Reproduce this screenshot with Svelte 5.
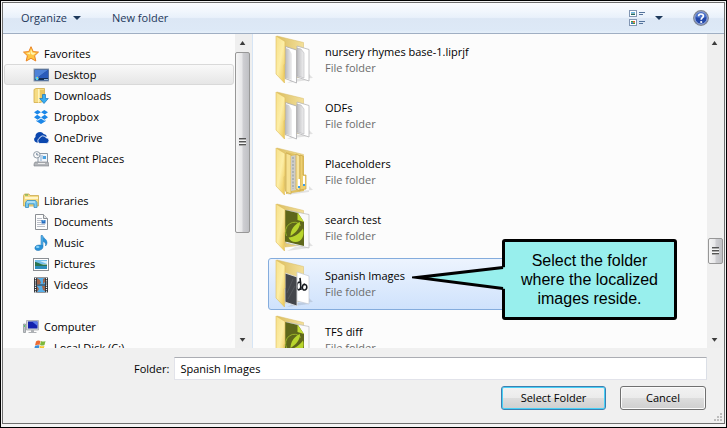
<script>
  const groups = [
    {
      name: 'Favorites', icon: 'star',
      items: [
        { name: 'Desktop', icon: 'desktop', current: true },
        { name: 'Downloads', icon: 'downloads' },
        { name: 'Dropbox', icon: 'dropbox' },
        { name: 'OneDrive', icon: 'onedrive' },
        { name: 'Recent Places', icon: 'recent' }
      ]
    },
    {
      name: 'Libraries', icon: 'libraries',
      items: [
        { name: 'Documents', icon: 'documents' },
        { name: 'Music', icon: 'music' },
        { name: 'Pictures', icon: 'pictures' },
        { name: 'Videos', icon: 'videos' }
      ]
    },
    {
      name: 'Computer', icon: 'computer',
      items: [{ name: 'Local Disk (C:)', icon: 'disk' }]
    }
  ];

  const folders = [
    { name: 'nursery rhymes base-1.liprjf', kind: 'pages' },
    { name: 'ODFs', kind: 'pages' },
    { name: 'Placeholders', kind: 'folders' },
    { name: 'search test', kind: 'leaf' },
    { name: 'Spanish Images', kind: 'photo', selected: true },
    { name: 'TFS diff', kind: 'leaf' }
  ];

  let folder = $state('Spanish Images');
</script>

{#snippet smallIcon(kind)}
  <svg class="small" viewBox="0 0 16 16" width="16" height="16" aria-hidden="true">
    {#if kind === 'star'}
      <path d="M8 .7 10.2 5.6 15.5 6.1 11.6 9.7 12.8 15 8 12.3 3.2 15 4.4 9.7.5 6.1 5.8 5.6Z" fill="#ffc642" stroke="#ea8324" stroke-width="1" />
      <path d="M8 3 9.3 6.5 13 7 10 9 8 8Z M8 3 6.7 6.5 3 7l4 1.500Z" fill="#fff3ae" />
    {:else if kind === 'desktop'}
      <rect x="1" y="2" width="15" height="12" fill="#234a8c" stroke="#8f9eb0" />
      <path d="M2 3h13L4 11H2Z" fill="#4f83d8" />
      <path d="M15 3v8H4Z" fill="#2a5cbb" />
      <path d="M2 11h13v2H2Z" fill="#142e55" />
      <circle cx="4" cy="11.500" r="1.700" fill="#5fd4f0" />
      <path d="M4 10h1v1H4Z" fill="#f4c545" />
      <path d="M11 12h4v1h-4Z" fill="#8fb7dc" />
    {:else if kind === 'downloads'}
      <path d="M1 1.500 3 .5h8.500V13L7 14.500H1Z" fill="#f6dc84" stroke="#d3ac48" stroke-width=".8" />
      <path d="M5 1h1.500v13L5 15Z" fill="#fff4bd" />
      <path d="M7 2h4v9H7Z" fill="#e8c761" />
      <path d="M9.500 6.500h3v4h2.800L11 15.500 6.700 10.500h2.800Z" fill="#39aef1" stroke="#1574bd" stroke-width=".7" />
    {:else if kind === 'dropbox'}
      <path d="M4.700 1 8 3.300 4.200 5.600 1 3.200ZM11.300 1 15 3.200 11.800 5.600 8 3.300ZM4.200 5.800 8 8.200 4.700 10.700 1 8.300ZM11.800 5.800 15 8.300 11.300 10.700 8 8.200ZM8 9.500l3.300 2.300 1.200-.7v1.200L8 15l-4.500-2.700v-1.200l1.200.7Z" fill="#1c87e8" />
    {:else if kind === 'onedrive'}
      <path d="M5 12.500H3.500A3 3 0 0 1 2.500 7 4.500 4.500 0 0 1 10.700 4 4 4 0 0 1 14 6.500L7 7Z" fill="#0b47ae" />
      <path d="M6.800 13.500a2.800 2.800 0 0 1-.2-5.300A3.500 3.500 0 0 1 13 7.700a2.900 2.900 0 0 1 .2 5.800Z" fill="#0b47ae" stroke="#fff" stroke-width=".8" />
    {:else if kind === 'recent'}
      <path d="M5 2.500h9.500V12H5Z" fill="#f2f6fa" stroke="#8c98a5" />
      <path d="M7 5h3M7 7h3M7 9h2" stroke="#84a9cf" />
      <path d="M10 5h3v3h-3Z" fill="#48a1e1" />
      <path d="M2 11h13l1 2v2H1v-2Z" fill="#b3b6ba" stroke="#7d8288" stroke-width=".6" />
      <path d="M5 12.500h7" stroke="#ececec" />
      <circle cx="3.800" cy="3.800" r="3.200" fill="#fafafa" stroke="#919ca7" />
      <path d="M3.800 2v2H5.500" stroke="#4c6480" fill="none" stroke-width=".8" />
    {:else if kind === 'libraries'}
      <path d="M.5 2.500 1.500 1H6l1 1.500h8.500V13h-15Z" fill="#f5db82" stroke="#caa94f" stroke-width=".8" />
      <path d="M2 4h13v2H2Z" fill="#fff5c8" />
      <path d="M2 2h3" stroke="#55a94c" />
      <path d="M2.500 14.500v-5L4 7.500h8.500l1.500 2v5h-3v-3.500H5.500v3.500Z" fill="#77c8ef" stroke="#3a8ebf" stroke-width=".8" />
      <path d="M4 9h8" stroke="#d8f2fc" />
    {:else if kind === 'documents'}
      <path d="M2.500.5h8l4 4v11h-12Z" fill="#fdfdfd" stroke="#8b8f94" />
      <path d="M10.500.5v4h4" fill="#e8e8e8" stroke="#8b8f94" />
      <path d="M4 4.500h5M4 6.500h5M4 8.500h4M4 10.500h8M4 12.500h8" stroke="#a8aebb" stroke-width=".8" />
      <path d="M8.500 6h4v3.500h-4Z" fill="#2568bb" />
      <path d="M9.500 6h2v1.500h-2Z" fill="#67b2ea" />
    {:else if kind === 'music'}
      <path d="M8 .5h1.500C10 3 14 4 14 7.500c0 1.500-.5 2.500-1.500 3.500.5-2.500-.5-4-2.500-4.500v5.300C10 14 7.500 15.500 5 15.500S1.500 14 2 12.300C2.500 10.500 5.500 9.500 8 10.300Z" fill="#2992d8" stroke="#1b6fae" stroke-width=".5" />
      <ellipse cx="4.700" cy="12" rx="1.800" ry="1" fill="#8bd4f8" />
      <path d="M9 1v9" stroke="#7fc8f2" stroke-width=".8" />
    {:else if kind === 'pictures'}
      <rect x=".5" y="2.500" width="15" height="12" fill="#fff" stroke="#8b8f94" />
      <path d="M2 4h12v4H2Z" fill="#75c0ec" />
      <path d="M7 5h7v3Z" fill="#d6eefb" />
      <path d="M2 6c3 0 5 3 12 2.500V10H2Z" fill="#2a7550" />
      <path d="M2 10h12v3H2Z" fill="#2d8dbb" />
    {:else if kind === 'videos'}
      <path d="M1 .5h14v15H1Z" fill="#2c3036" />
      <path d="M4 1h8v6.500H4ZM4 8.500h8V15H4Z" fill="#56aee8" />
      <path d="M4 1l3 2 1 3-2 1.500H4ZM10 2l2-1v4l-2 2ZM4 9l2 3-2 3ZM9 9h3v5l-2-1Z" fill="#a0654b" />
      <path d="M2.500 1v15M13.500 1v15" stroke="#fff" stroke-width="1.200" stroke-dasharray="1.200 1" />
    {:else if kind === 'computer'}
      <path d="M.5 5h2v8.500h-2Z" fill="#c0c4c8" stroke="#888d92" stroke-width=".7" />
      <path d="M1 6h1v2H1Z" fill="#4fd166" />
      <path d="M3.500 1.500h12V11h-12Z" fill="#d5d7da" stroke="#a2a5aa" stroke-width=".8" />
      <path d="M5 2.500h9.500V9.500H5Z" fill="#1320ad" />
      <path d="M9 2.500h5.500V7Z" fill="#5879ea" />
      <path d="M8 11h3v2h2.500v1h-8v-1H8Z" fill="#aeb1b5" />
    {:else}
      <path d="M1 9h11l4 3v3H1Z" fill="#b5b8bc" />
      <path d="M3 1.500C5 0 6 .5 7.500 1L6.500 5C5 4.500 4 4.500 2 5.500Z" fill="#ec6b32" />
      <path d="M8 1c1.500.7 3 .7 4.500 0l-1 4c-1.500.7-3 .7-4.500 0Z" fill="#7db83a" />
      <path d="M2 6c1.500-1 3-1 4.500-.5l-1 4C4 9 3 9 1 9.500Z" fill="#3b8fd8" />
      <path d="M7 5.700c1.500.7 3 .7 4.500 0l-1 4c-1.500.7-3 .7-4.500 0Z" fill="#f7c52f" />
    {/if}
  </svg>
{/snippet}

{#snippet folderIcon(kind)}
  <svg class="folder" viewBox="0 0 38 50" width="38" height="50" aria-hidden="true">
    <defs>
      <linearGradient id="flap" x1="0" y1="0" x2="1" y2="1">
        <stop offset="0" stop-color="#f6e08a" />
        <stop offset=".5" stop-color="#fdeea6" />
        <stop offset="1" stop-color="#ebc44f" />
      </linearGradient>
      <linearGradient id="back" x1="0" y1="0" x2="1" y2="0">
        <stop offset="0" stop-color="#dcbf62" />
        <stop offset="1" stop-color="#f3e09b" />
      </linearGradient>
      <linearGradient id="sheet" x1="0" y1="0" x2="1" y2="0">
        <stop offset="0" stop-color="#bcbcbf" />
        <stop offset="1" stop-color="#f0f0f1" />
      </linearGradient>
    </defs>
    <path d="M20 44 38 43 34 39V45L12 48Z" fill="#000" opacity=".1" />
    <path d="M2 1 28.500 7.500V42L10 44Z" fill="url(#back)" stroke="#d8bb62" stroke-width=".5" />
    {#if kind === 'pages'}
      <path d="M22 11 34 14.500V46L22 42Z" fill="#fff" stroke="#b5b5b8" stroke-width=".8" />
      <path d="M22 13 26 14 29 18V43L22 41Z" fill="url(#sheet)" stroke="#a9a9ac" stroke-width=".5" />
      <path d="M10.500 11.500 21.500 15V48L10.500 43.500Z" fill="#fff" stroke="#ababae" stroke-width=".8" />
      <path d="M10.500 13 14 14 17 19V45L10.500 43Z" fill="url(#sheet)" />
    {:else if kind === 'folders'}
      <path d="M11 5 29 9V44L11 47Z" fill="#e0c160" />
      <path d="M11 6 16 8V47L11 45Z" fill="#f6e193" stroke="#c9a94e" stroke-width=".7" />
      <path d="M16 9 21 8V43L16 44Z" fill="#cfcdc7" />
      <path d="M18 10V42" stroke="#8999a0" stroke-dasharray="2 1.500" />
      <path d="M21 7 25 9V44L21 42Z" fill="#f7e49c" stroke="#c8a446" stroke-width=".7" />
      <path d="M25 8 28 9V28H31V42L25 43Z" fill="#edcf70" stroke="#c8a446" stroke-width=".7" />
      <path d="M23 32h2v8h-2ZM28 29h2v9h-2Z" fill="#fff" />
      <path d="M23 39h2v2h-2ZM28 37h2v2h-2Z" fill="#3b9ce8" />
    {:else if kind === 'leaf'}
      <path d="M11 7 34 11.500V45L11 40Z" fill="#fafafa" stroke="#b9b9b9" stroke-width=".7" />
      <path d="M10 7 23 10 29 19V43L10 38.500Z" fill="#5f671b" />
      <path d="M22.500 9.500 29 19 22.500 17Z" fill="#c3dc34" />
      <path d="M11.500 33A8.800 9.500 0 0 1 26 22.500" fill="none" stroke="#a8c52b" stroke-width=".8" />
      <path d="M15.500 33C15.500 27 19 21.500 25 19 25 25 21.500 29 15.500 33Z" fill="#b8d52d" />
      <path d="M13.500 34.500C19 34 24 31 28 25.500 30 33 26.500 39 20.500 39 17 39 14.500 37 13.500 34.500Z" fill="#b8d52d" />
    {:else}
      <path d="M22 13 34 17V45L22 42Z" fill="#fff" stroke="#c3c8d2" stroke-width=".7" />
      <path d="M25 23c-4 0-4 8-1 8 3-1 1-12 1-12l1 12M30 25c-4 1-3 7 0 6 3-1 2-7-1-5" fill="none" stroke="#15191f" stroke-width="1.500" />
      <path d="M10 14 22 18V47L10 43Z" fill="#44464b" stroke="#e6e6e6" stroke-width=".8" />
      <path d="M18 20 12 34M20 27 13 40" stroke="#585a60" stroke-width=".8" />
    {/if}
    <path d="M1 1 10 6.500V28.500L9 30 9.500 48 1 39Z" fill="url(#flap)" stroke="#dfbe5b" stroke-width=".6" />
  </svg>
{/snippet}

{#snippet scrollbar(place)}
  <div class="scrollbar {place}" aria-hidden="true">
    <svg class="arrow" viewBox="0 0 17 18" width="17" height="18"><path d="M5 11 8 7 11 11Z" fill="#3c3c3c" /></svg>
    <div class="track">
      <div class="thumb"><span></span></div>
    </div>
    <svg class="arrow" viewBox="0 0 17 18" width="17" height="18"><path d="M5 8H11L8 12Z" fill="#3c3c3c" /></svg>
  </div>
{/snippet}

<main class="outer">
  <div class="dialog">
    <header class="toolbar">
      <button type="button" class="organize">Organize
        <svg viewBox="0 0 8 4" width="8" height="4" aria-hidden="true"><path d="M0 0H8L4 4Z" fill="#1e395b" /></svg>
      </button>
      <button type="button">New folder</button>
      <button type="button" class="view" aria-label="Change your view">
        <svg viewBox="0 0 16 16" width="16" height="16" aria-hidden="true">
          <rect x=".5" y=".5" width="7" height="6" fill="#fff" stroke="#8296b3" />
          <path d="M2 2h4v1H2Z" fill="#6bb6e6" /><path d="M2 3.500h4V5H2Z" fill="#226a62" />
          <rect x=".5" y="9.500" width="7" height="6" fill="#fff" stroke="#8296b3" />
          <path d="M2 11h2v1.500H2ZM4 12.500h2V14H4Z" fill="#3c9b3f" /><path d="M4 11h2v1.500H4Z" fill="#e35d32" /><path d="M2 12.500h2V14H2Z" fill="#2f67bf" />
          <path d="M10 2.500h6M10 4.500h4M10 11.500h6M10 13.500h4" stroke="#54739b" />
        </svg>
        <svg viewBox="0 0 8 4" width="8" height="4" aria-hidden="true"><path d="M0 0H8L4 4Z" fill="#1e395b" /></svg>
      </button>
      <button type="button" class="help" aria-label="Get help">
        <svg viewBox="0 0 16 16" width="16" height="16" aria-hidden="true">
          <circle cx="8" cy="8" r="7.300" fill="#2448a9" stroke="#83878f" stroke-width="1.200" />
          <circle cx="8" cy="8" r="6.200" fill="none" stroke="#d4dcf0" stroke-width=".8" />
          <path d="M2.500 7a5.600 5.600 0 0 1 11 0Q8 9 2.500 7Z" fill="#4a72cb" />
          <path d="M5.600 6.200C5.600 3.300 10.400 3.300 10.400 6c0 1.700-2.200 1.700-2.200 3.700" fill="none" stroke="#fff" stroke-width="1.700" />
          <circle cx="8.200" cy="12" r="1.100" fill="#fff" />
        </svg>
      </button>
    </header>

    <div class="panes">
      <nav class="tree" aria-label="Places">
        {#each groups as group}
          <ul>
            <li><a href="#{group.icon}" class="group">{@render smallIcon(group.icon)}{group.name}</a></li>
            {#each group.items as item}
              <li>
                <a href="#{item.icon}" class:current={item.current}>{@render smallIcon(item.icon)}{item.name}</a>
              </li>
            {/each}
          </ul>
        {/each}
      </nav>
      {@render scrollbar('left')}

      <ul class="files">
        {#each folders as entry}
          <li class:selected={entry.selected}>
            {@render folderIcon(entry.kind)}
            <div class="about">
              <span class="name">{entry.name}</span>
              <span class="type">File folder</span>
            </div>
            {#if entry.selected}
              <div class="callout">
                <svg viewBox="0 0 94 30" width="94" height="30" aria-hidden="true">
                  <path d="M94 4 90 4.500 5 14.500 90 25.500 94 26Z" fill="#98efed" />
                  <path d="M91 4.500 5 14.500 91 25.500" fill="none" stroke="#000" stroke-width="3" stroke-miterlimit="10" />
                </svg>
                <p>Select the folder<br />where the localized<br />images reside.</p>
              </div>
            {/if}
          </li>
        {/each}
      </ul>
      {@render scrollbar('right')}
    </div>

    <footer>
      <div class="field">
        <label for="folder">Folder:</label>
        <input id="folder" type="text" bind:value={folder} />
      </div>
      <div class="actions">
        <button type="button" class="primary">Select Folder</button>
        <button type="button" class="cancel">Cancel</button>
      </div>
      <svg class="grip" viewBox="0 0 9 9" width="9" height="9" aria-hidden="true">
        <path d="M6 0h2v2H6ZM3 3h2v2H3ZM6 3h2v2H6ZM0 6h2v2H0ZM3 6h2v2H3ZM6 6h2v2H6Z" fill="#bdbdbd" />
      </svg>
    </footer>
  </div>
</main>

<style>
  .outer {
    box-sizing: border-box;
    height: 100vh;
    padding: 1px 1px 3px;
    border: 1px solid #000;
    background: #f4f4f4;
    color: #000;
    font: 11px/16px "Open Sans", "Noto Sans", sans-serif;
  }
  .dialog {
    box-sizing: border-box;
    display: flex;
    flex-direction: column;
    height: 100%;
    border: 1px solid #6f6f6f;
    background: #f0f0f0;
  }
  ul {
    margin: 0;
    padding: 0;
    list-style: none;
  }
  button {
    font: inherit;
  }

  .toolbar {
    display: flex;
    align-items: center;
    height: 30px;
    padding: 0 15px 0 18px;
    border-bottom: 1px solid #a0afc3;
    background: linear-gradient(#fcfdff, #e9f1fb 48%, #dce7f5 52%, #dde9f7 90%, #e6f0fa);
  }
  .toolbar button {
    display: flex;
    align-items: center;
    padding: 0;
    border: 0;
    background: none;
    color: #1e395b;
  }
  .toolbar .organize {
    gap: 6px;
    margin-right: 31px;
  }
  .toolbar .view {
    gap: 10px;
    margin-left: auto;
    margin-right: 30px;
  }

  .panes {
    display: flex;
    flex: 1;
    min-height: 0;
    background: #fcfcfc;
  }
  .tree {
    box-sizing: border-box;
    flex: 0 0 232px;
    padding: 9px 1px 0;
    overflow: hidden;
  }
  .tree ul {
    margin-bottom: 21px;
  }
  .tree a {
    box-sizing: border-box;
    display: flex;
    align-items: center;
    gap: 5px;
    height: 21px;
    padding-left: 28px;
    border: 1px solid transparent;
    border-radius: 3px;
    color: #000;
    text-decoration: none;
  }
  .tree .group {
    padding-left: 18px;
  }
  .tree .current {
    border-color: #d9d9d9;
    background: linear-gradient(#f9f9f9, #e6e6e6);
  }
  svg {
    flex: none;
  }

  .scrollbar {
    display: flex;
    flex: 0 0 17px;
    flex-direction: column;
    background: #efefef;
  }
  .scrollbar.left {
    box-sizing: border-box;
    flex-basis: 18px;
    border-right: 1px solid #d6e5f5;
    padding-right: 1px;
  }
  .arrow {
    display: block;
    width: 16px;
  }
  .track {
    display: flex;
    flex: 1;
    flex-direction: column;
  }
  .thumb {
    box-sizing: border-box;
    display: flex;
    align-items: center;
    justify-content: center;
    width: 15px;
    height: 26px;
    border: 1px solid #979797;
    border-radius: 2px;
    background: linear-gradient(90deg, #f5f5f5, #e6e6e8 48%, #cfcfd3 52%, #bfc0c4);
  }
  .left .thumb {
    height: 65%;
  }
  .right .thumb {
    margin-left: 1px;
  }
  .right .track::before {
    content: "";
    flex: 0 0 67%;
  }
  .thumb span {
    width: 7px;
    height: 8px;
    background: repeating-linear-gradient(#555 0 1px, #aaa 1px 2px, #f4f4f4 2px 3px);
  }

  .files {
    display: flex;
    flex: 1;
    flex-direction: column;
    gap: 4px;
    min-width: 0;
    padding: 0 60px 0 15px;
    overflow: hidden;
    position: relative;
  }
  .files li {
    box-sizing: border-box;
    display: flex;
    flex: none;
    gap: 12px;
    height: 52px;
    padding-left: 6px;
    border: 1px solid transparent;
    border-radius: 3px;
    position: relative;
  }
  .files .selected {
    border-color: #84acdd;
    background: linear-gradient(#edf4fe, #cfe2fc);
  }
  .about {
    display: flex;
    flex-direction: column;
    padding-top: 9px;
  }
  .type {
    color: #6d6d6d;
  }

  .callout {
    position: absolute;
    top: -20px;
    left: 143px;
    display: flex;
    z-index: 1;
  }
  .callout svg {
    margin: 24px -4px 0 0;
    z-index: 1;
  }
  .callout p {
    box-sizing: border-box;
    width: 175px;
    margin: 0;
    padding: 9px 0;
    border: 3px solid #000;
    border-radius: 3px;
    background: #98efed;
    font: 16px/19px "Liberation Sans", Arial, sans-serif;
    text-align: center;
    white-space: nowrap;
  }

  footer {
    position: relative;
    display: flex;
    flex-direction: column;
    gap: 6px;
    padding: 9px 17px 13px;
  }
  .field {
    display: flex;
    align-items: center;
    gap: 5px;
    padding-left: 114px;
  }
  .field input {
    box-sizing: border-box;
    flex: 1;
    min-width: 0;
    height: 23px;
    padding: 0 5px;
    border: 1px solid #e2e3ea;
    border-top-color: #abadb3;
    border-right-color: #dbdfe6;
    background: #fff;
    color: #000;
    font: inherit;
  }
  .actions {
    display: flex;
    justify-content: flex-end;
    gap: 14px;
    padding-right: 1px;
  }
  .actions button {
    box-sizing: border-box;
    height: 24px;
    padding: 0;
    border: 1px solid #707070;
    border-radius: 3px;
    background: linear-gradient(#f2f2f2, #ebebeb 49%, #dddddd 51%, #cfcfcf);
    box-shadow: inset 0 0 0 1px #fbfbfb;
    color: #000;
  }
  .actions .primary {
    width: 105px;
    border-color: #3c7fb1;
    box-shadow: inset 0 0 0 1px #48d0f6;
  }
  .actions .cancel {
    width: 86px;
  }
  .grip {
    position: absolute;
    right: 1px;
    bottom: 1px;
  }
</style>
